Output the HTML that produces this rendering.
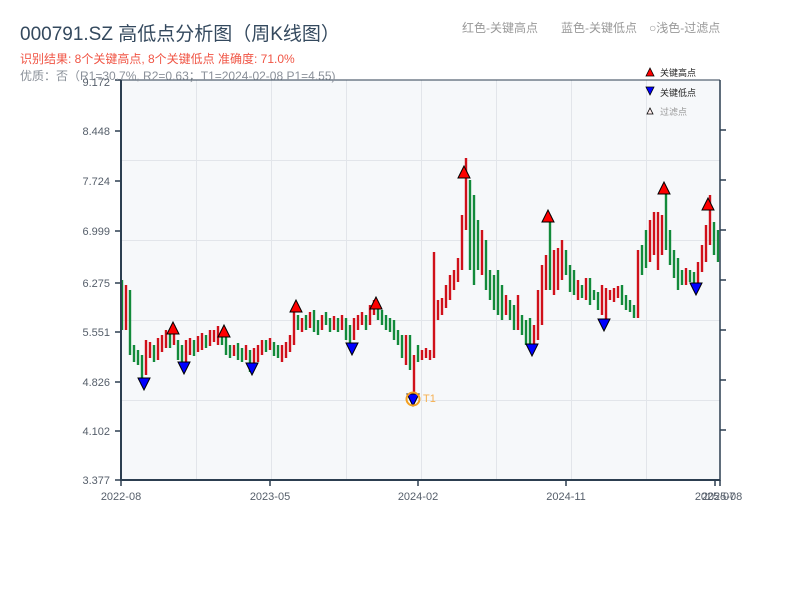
<!DOCTYPE html>
<html><head><meta charset="utf-8"><style>
html,body{margin:0;padding:0;background:#fff;width:800px;height:600px;overflow:hidden}
svg{display:block}
text{font-family:"Liberation Sans","Noto Sans CJK SC",sans-serif}
</style></head><body>
<svg width="800" height="600" xmlns="http://www.w3.org/2000/svg">
<rect x="121" y="80" width="599" height="400" fill="#f6f8fa"/>
<g stroke="#e2e5ea" stroke-width="1">
<line x1="121" y1="160.5" x2="720" y2="160.5"/><line x1="121" y1="240.5" x2="720" y2="240.5"/>
<line x1="121" y1="320.5" x2="720" y2="320.5"/><line x1="121" y1="400.5" x2="720" y2="400.5"/>
<line x1="196.5" y1="80" x2="196.5" y2="480"/><line x1="271.5" y1="80" x2="271.5" y2="480"/>
<line x1="346.5" y1="80" x2="346.5" y2="480"/><line x1="421.5" y1="80" x2="421.5" y2="480"/>
<line x1="496.5" y1="80" x2="496.5" y2="480"/><line x1="571.5" y1="80" x2="571.5" y2="480"/>
<line x1="646.5" y1="80" x2="646.5" y2="480"/>
</g>
<path fill="none" stroke="#d0101a" stroke-width="2.4" d="M126 285V330M146 340V375M150 342V358M158 338V360M162 335V352M166 330V348M174 325V345M186 340V362M190 338V355M198 336V352M202 333V350M210 330V346M214 330V342M218 326V345M234 345V356M246 345V360M254 348V365M258 345V362M262 340V355M270 338V350M282 345V362M286 342V358M290 335V352M294 310V345M302 318V332M310 312V328M322 315V330M334 316V330M342 315V330M354 318V340M358 315V330M362 312V325M370 305V325M374 300V315M406 335V365M414 355V400M422 350V360M426 348V358M430 350V360M434 252V358M438 300V320M442 298V315M446 285V308M450 275V300M454 270V290M458 258V282M462 215V270M466 158V230M482 230V275M506 295V315M518 295V330M534 325V350M538 290V340M542 265V325M546 255V290M554 250V295M558 248V290M562 240V280M578 280V300M586 278V300M602 285V315M606 288V320M610 290V300M614 288V302M618 286V298M638 250V318M650 220V262M654 212V255M658 212V270M662 215V255M686 268V285M698 262V290M702 245V272M706 225V262M710 195V245"/>
<path fill="none" stroke="#128a3a" stroke-width="2.4" d="M122 280V330M130 290V355M134 345V362M138 350V365M142 355V385M154 345V362M170 332V348M178 340V360M182 345V368M194 340V356M206 335V348M222 330V345M226 335V355M230 345V358M238 343V360M242 348V362M250 350V372M266 340V352M274 342V356M278 345V358M298 315V330M306 315V330M314 310V332M318 320V335M326 312V325M330 318V332M338 318V332M346 318V340M350 325V345M366 315V330M378 305V320M382 310V325M386 315V330M390 318V332M394 320V340M398 330V345M402 335V358M410 335V370M418 345V362M470 180V270M474 195V285M478 220V270M486 240V290M490 270V300M494 275V310M498 270V315M502 285V320M510 300V320M514 305V330M522 315V335M526 320V345M530 318V345M550 215V290M566 250V275M570 265V292M574 270V295M582 285V298M590 278V305M594 290V300M598 292V310M622 285V305M626 295V310M630 300V312M634 305V318M642 245V275M646 230V268M666 188V250M670 230V265M674 250V278M678 258V290M682 270V285M690 270V282M694 272V290M714 222V255M718 230V262"/>
<g stroke="#2c3e50" stroke-width="2" fill="none">
<line x1="121" y1="80" x2="121" y2="481"/><line x1="120" y1="480" x2="720" y2="480"/>
<line x1="121" y1="80" x2="720" y2="80" stroke-width="1"/><line x1="720" y1="80" x2="720" y2="481" stroke-width="1.5"/>
</g>
<g stroke="#2c3e50" stroke-width="1.5">
<line x1="115" y1="80" x2="121" y2="80"/><line x1="115" y1="131" x2="121" y2="131"/><line x1="115" y1="181" x2="121" y2="181"/>
<line x1="115" y1="231" x2="121" y2="231"/><line x1="115" y1="283" x2="121" y2="283"/><line x1="115" y1="332" x2="121" y2="332"/>
<line x1="115" y1="382" x2="121" y2="382"/><line x1="115" y1="431" x2="121" y2="431"/><line x1="115" y1="480" x2="121" y2="480"/>
<line x1="720" y1="130" x2="726" y2="130"/><line x1="720" y1="180" x2="726" y2="180"/><line x1="720" y1="230" x2="726" y2="230"/>
<line x1="720" y1="280" x2="726" y2="280"/><line x1="720" y1="330" x2="726" y2="330"/><line x1="720" y1="380" x2="726" y2="380"/>
<line x1="720" y1="430" x2="726" y2="430"/>
<line x1="121" y1="480" x2="121" y2="486"/><line x1="270" y1="480" x2="270" y2="486"/><line x1="418" y1="480" x2="418" y2="486"/>
<line x1="566" y1="480" x2="566" y2="486"/><line x1="715" y1="480" x2="715" y2="486"/><line x1="720" y1="480" x2="720" y2="486"/>
</g>
<g font-size="11" fill="#555e6a" text-anchor="end">
<text x="110" y="135">8.448</text><text x="110" y="185">7.724</text><text x="110" y="235">6.999</text>
<text x="110" y="287">6.275</text><text x="110" y="336">5.551</text><text x="110" y="386">4.826</text>
<text x="110" y="435">4.102</text><text x="110" y="484">3.377</text>
</g>
<g font-size="11" fill="#555e6a" text-anchor="middle">
<text x="121" y="500">2022-08</text><text x="270" y="500">2023-05</text><text x="418" y="500">2024-02</text>
<text x="566" y="500">2024-11</text><text x="715" y="500">2025-07</text><text x="722" y="500">2025-08</text>
</g>
<text x="20" y="40" font-size="19" fill="#34495e">000791.SZ 高低点分析图（周K线图）</text>
<text x="20" y="63" font-size="12" fill="#f05545">识别结果: 8个关键高点, 8个关键低点  准确度: 71.0%</text>
<text x="20" y="80" font-size="12" fill="#8a9099">优质：否（R1=30.7%, R2=0.63；T1=2024-02-08 P1=4.55)</text>
<text x="110" y="86" font-size="11" fill="#555e6a" text-anchor="end">9.172</text>
<g font-size="12" fill="#999">
<text x="462" y="32">红色-关键高点</text><text x="561" y="32">蓝色-关键低点</text><text x="649" y="32">○浅色-过滤点</text>
</g>
<polygon points="646,76 650,68 654,76" fill="#f00" stroke="#000" stroke-width="0.8"/>
<text x="660" y="76" font-size="9" fill="#222">关键高点</text>
<polygon points="646,87 654,87 650,95" fill="#00f" stroke="#000" stroke-width="0.8"/>
<text x="660" y="96" font-size="9" fill="#222">关键低点</text>
<polygon points="647,114 650,108 653,114" fill="#fee" stroke="#000" stroke-width="0.8"/>
<text x="660" y="115" font-size="9" fill="#999">过滤点</text>
<g fill="#f00" stroke="#000" stroke-width="1">
<polygon points="167,334 173,322 179,334"/><polygon points="218,337 224,325 230,337"/>
<polygon points="290,312 296,300 302,312"/><polygon points="370,309 376,297 382,309"/>
<polygon points="458,178 464,166 470,178"/><polygon points="542,222 548,210 554,222"/>
<polygon points="658,194 664,182 670,194"/><polygon points="702,210 708,198 714,210"/>
</g>
<g fill="#00f" stroke="#000" stroke-width="1">
<polygon points="138,378 150,378 144,390"/><polygon points="178,362 190,362 184,374"/>
<polygon points="246,363 258,363 252,375"/><polygon points="346,343 358,343 352,355"/>
<polygon points="407,394 419,394 413,406"/><polygon points="526,344 538,344 532,356"/>
<polygon points="598,319 610,319 604,331"/><polygon points="690,283 702,283 696,295"/>
</g>
<circle cx="413" cy="399" r="6.5" fill="none" stroke="#f5a020" stroke-width="2"/>
<text x="423" y="402" font-size="11" fill="#f5b050">T1</text>
</svg>
</body></html>
